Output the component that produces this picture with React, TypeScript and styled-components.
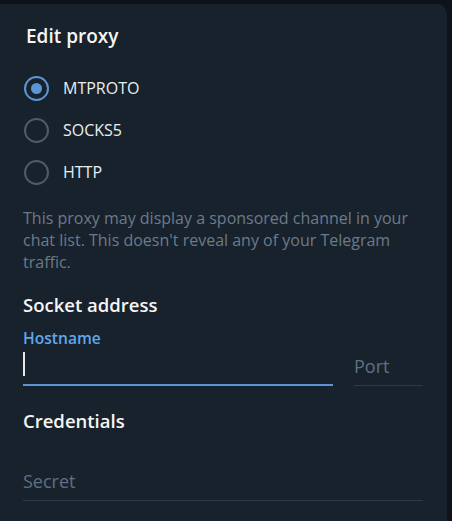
import styled, { createGlobalStyle } from "styled-components"

// Page reset, dark window behind the dialog
const GlobalStyle = createGlobalStyle`
	html, body, #root {
		margin: 0;
		padding: 0;
		height: 100%;
		background: #0e1319;
	}
	* {
		box-sizing: border-box;
	}
`

const COLORS = {
	panel: "#18222c",
	title: "#f5f5f5",
	text: "#e9eef2",
	hint: "#6c7a88",
	accent: "#5fa7ea",
	line: "#5b95d3",
	placeholder: "#5f7082",
	border: "#2d3946",
	ring: "#4d5c6b",
}

const Page = styled.div`
	height: 100%;
	padding: 4px 5px 0 0;
	font-family: "Open Sans", "Noto Sans", sans-serif;
	overflow: hidden;
`

const Panel = styled.div`
	height: 100%;
	background: ${COLORS.panel};
	border-top-right-radius: 10px;
	padding: 20px 24px 0 23px;
	display: flex;
	flex-direction: column;
`

const Title = styled.div<{ $gap?: number; $size?: number; $indent?: number }>`
	font-size: ${(p) => p.$size ?? 18.5}px;
	font-weight: 600;
	line-height: 24px;
	color: ${COLORS.title};
	margin-top: ${(p) => p.$gap ?? 0}px;
	padding-left: ${(p) => p.$indent ?? 0}px;
`

const RadioList = styled.div`
	display: flex;
	flex-direction: column;
	margin-top: 19px;
`

const RadioRow = styled.label`
	height: 42px;
	display: flex;
	align-items: center;
	gap: 14px;
	padding-left: 1px;
	cursor: pointer;
`

const RadioCircle = styled.span<{ $checked?: boolean }>`
	width: 25px;
	height: 25px;
	border-radius: 50%;
	border: 2.5px solid ${(p) => (p.$checked ? COLORS.line : COLORS.ring)};
	display: flex;
	align-items: center;
	justify-content: center;

	&::after {
		content: "";
		width: 11px;
		height: 11px;
		border-radius: 50%;
		background: ${COLORS.line};
		display: ${(p) => (p.$checked ? "block" : "none")};
	}
`

const RadioLabel = styled.span`
	font-size: 16px;
	line-height: 22px;
	color: ${COLORS.text};
`

const Description = styled.div`
	margin-top: 14px;
	font-size: 16px;
	line-height: 22px;
	color: ${COLORS.hint};
`

const FieldRow = styled.div`
	display: flex;
	gap: 21px;
`

const Field = styled.div<{ $width?: number; $gap?: number }>`
	display: flex;
	flex-direction: column;
	flex: ${(p) => (p.$width ? `0 0 ${p.$width}px` : "1")};
	margin-top: ${(p) => p.$gap ?? 0}px;
`

const FieldLabel = styled.div`
	height: 20px;
	font-size: 15.6px;
	font-weight: 600;
	line-height: 20px;
	color: ${COLORS.accent};
`

const InputBox = styled.div<{ $active?: boolean }>`
	height: 38px;
	display: flex;
	align-items: flex-end;
	padding-bottom: 8px;
	border-bottom: ${(p) => (p.$active ? `2px solid ${COLORS.line}` : `1px solid ${COLORS.border}`)};
	margin-bottom: ${(p) => (p.$active ? 0 : 1)}px;
	position: relative;
`

const Placeholder = styled.span`
	font-size: 18px;
	line-height: 22px;
	color: ${COLORS.placeholder};
`

const Caret = styled.span`
	position: absolute;
	left: 0;
	top: 4px;
	width: 1.5px;
	height: 24px;
	background: #e6e6e6;
`

const protocols = [
	{ id: "mtproto", label: "MTPROTO" },
	{ id: "socks5", label: "SOCKS5" },
	{ id: "http", label: "HTTP" },
]

export default function App() {
	const selected = "mtproto"

	return (
		<Page>
			<GlobalStyle />
			<Panel>
				<Title $size={19} $indent={3}>
					Edit proxy
				</Title>

				<RadioList>
					{protocols.map((p) => (
						<RadioRow key={p.id}>
							<RadioCircle $checked={p.id === selected} />
							<RadioLabel>{p.label}</RadioLabel>
						</RadioRow>
					))}
				</RadioList>

				<Description>
					This proxy may display a sponsored channel in your chat list. This doesn't reveal any of your Telegram traffic.
				</Description>

				<Title $gap={20}>Socket address</Title>
				<FieldRow>
					<Field $gap={11}>
						<FieldLabel>Hostname</FieldLabel>
						<InputBox $active>
							<Caret />
						</InputBox>
					</Field>
					<Field $width={69} $gap={11}>
						<FieldLabel />
						<InputBox>
							<Placeholder>Port</Placeholder>
						</InputBox>
					</Field>
				</FieldRow>

				<Title $gap={22}>Credentials</Title>
				<Field $gap={10}>
					<FieldLabel />
					<InputBox>
						<Placeholder>Secret</Placeholder>
					</InputBox>
				</Field>
			</Panel>
		</Page>
	)
}
